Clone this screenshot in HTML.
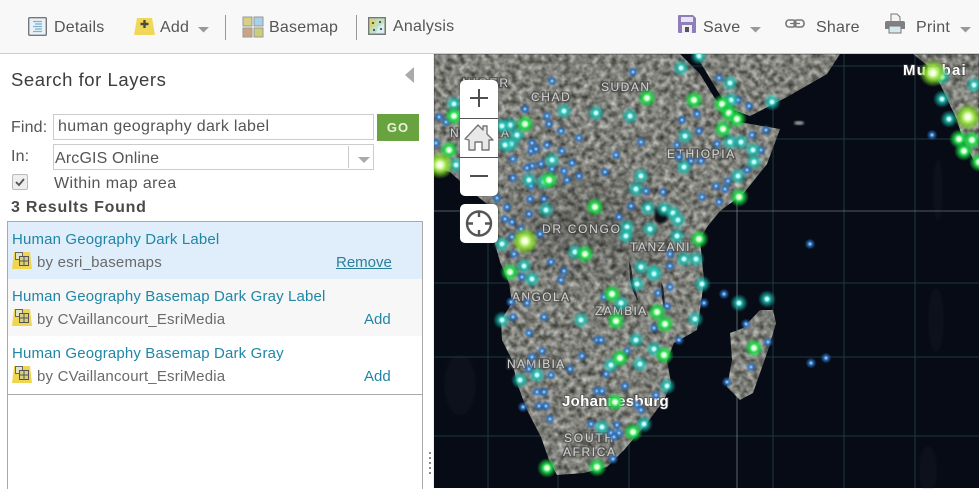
<!DOCTYPE html>
<html><head><meta charset="utf-8">
<style>
html,body{margin:0;padding:0;width:979px;height:488px;overflow:hidden;background:#fff;font-family:"Liberation Sans",sans-serif}
.a{position:absolute;white-space:nowrap;line-height:1}
#bar{position:absolute;left:0;top:0;width:979px;height:53px;background:#f8f8f8;border-bottom:1px solid #ccc}
.t{font-size:16px;color:#555;letter-spacing:.22px}
.sep{position:absolute;width:1px;height:25px;top:15px;background:#999}
.p{font-size:16px;color:#555;letter-spacing:.15px}
.title{font-size:15px;color:#1f86a6;letter-spacing:.15px}
.by{font-size:15px;color:#6a6a6a;letter-spacing:.2px}
.box{position:absolute;border:1px solid #ccc;box-sizing:border-box;background:#fff}
svg{position:absolute;overflow:visible}
</style></head><body>

<svg style="left:434px;top:54px" width="545" height="434" viewBox="434 54 545 434">
<defs>
<filter id="n" filterUnits="userSpaceOnUse" x="434" y="54" width="545" height="434" color-interpolation-filters="sRGB">
<feTurbulence type="fractalNoise" baseFrequency=".17" numOctaves="4" seed="7"/>
<feColorMatrix values=".8 0 0 0 .1 .8 0 0 0 .1 .8 0 0 0 .08 0 0 0 0 1"/>
<feGaussianBlur stdDeviation=".45"/>
<feComposite in2="SourceAlpha" operator="in"/>
</filter>
<filter id="bl"><feGaussianBlur stdDeviation="1"/></filter>
<filter id="bb"><feGaussianBlur stdDeviation="22"/></filter>
<radialGradient id="gb"><stop offset="0" stop-color="#cef"/><stop offset=".18" stop-color="#6ab0e8"/><stop offset=".45" stop-color="#2b6fc0" stop-opacity=".8"/><stop offset="1" stop-color="#2060b0" stop-opacity="0"/></radialGradient>
<radialGradient id="gt"><stop offset="0" stop-color="#fff"/><stop offset=".16" stop-color="#bff"/><stop offset=".4" stop-color="#1fc4b4" stop-opacity=".8"/><stop offset="1" stop-color="#10a8a0" stop-opacity="0"/></radialGradient>
<radialGradient id="gg"><stop offset="0" stop-color="#fff"/><stop offset=".2" stop-color="#d8ffd8"/><stop offset=".42" stop-color="#22e04a" stop-opacity=".95"/><stop offset="1" stop-color="#10c040" stop-opacity="0"/></radialGradient>
<radialGradient id="gy"><stop offset="0" stop-color="#fff"/><stop offset=".2" stop-color="#eaffc8"/><stop offset=".5" stop-color="#8fe030" stop-opacity=".9"/><stop offset="1" stop-color="#70d020" stop-opacity="0"/></radialGradient>
<circle id="b" r="5.5" fill="url(#gb)"/>
<circle id="t" r="9" fill="url(#gt)"/>
<circle id="g" r="10" fill="url(#gg)"/>
<circle id="y" r="14" fill="url(#gy)"/>
</defs>
<rect x="434" y="54" width="545" height="434" fill="#070b15"/>
<g fill="#3b4a52" opacity=".1" filter="url(#bl)">
<ellipse cx="936" cy="320" rx="8" ry="32"/><ellipse cx="928" cy="470" rx="9" ry="24"/><ellipse cx="938" cy="190" rx="5" ry="30"/><ellipse cx="460" cy="385" rx="16" ry="30"/>
</g>
<g stroke="#1d3a40" stroke-width="1">
<path d="M488 54V488M558 54V488M629 54V488M773 54V488M844 54V488M915 54V488M434 66H979M434 139H979M434 283H979M434 357H979M434 436H979"/>
</g>
<g stroke="#7f8f90" stroke-width="1"><path d="M737 54V488" opacity=".7"/><path d="M434 211H979" opacity=".6"/></g>
<g filter="url(#n)">
<path d="M434 54H680L700 74L714 97L733 121L780 129L767 164L743 194L720 211L707 227L700 240L704 280L700 310L697 330L674 343L667 360L671 383L664 400L647 423L624 450L607 467L584 473L557 475L549 460L541 437L527 410L517 383L512 360L502 340L501 320L512 303L509 283L500 262L494 240L488 205L470 190L450 172L434 168Z" fill="#fff"/>
<path d="M695 54H840L827 74L787 97L750 116L728 108L717 90L705 70Z" fill="#fff"/>
<path d="M913 54L933 70L943 90L957 120L963 140L979 170V54Z" fill="#fff"/>
<path d="M760 310L773 310L776 323L768 350L753 393L740 400L727 387L732 360L730 333L743 328Z" fill="#fff"/>
</g>
<ellipse cx="585" cy="225" rx="75" ry="45" fill="#000" opacity=".18" filter="url(#bb)"/>
<ellipse cx="799" cy="123" rx="5" ry="2" fill="#999" filter="url(#bl)"/>
<g fill="#0a0d14">
<path d="M655 211l6 -4 7 5 -1 9 -8 3 -5 -5z" filter="url(#bl)"/>
<path d="M629 262l2 4 2 14 3 12 2 8 -1 0 -4 -9 -3 -12z" opacity=".8"/>
<path d="M661 283l2 3 2 18 -1 5 -2 -11z" opacity=".8"/>
</g>
<g font-family="Liberation Sans,sans-serif" font-size="12" fill="#d4d4d4" style="paint-order:stroke" stroke="#444" stroke-width="3" stroke-opacity=".6">
<text x="462" y="87" letter-spacing="2">NIGER</text>
<text x="531" y="101" letter-spacing="1.6">CHAD</text>
<text x="601" y="91" letter-spacing="1.5">SUDAN</text>
<text x="667" y="158" letter-spacing="1.6">ETHIOPIA</text>
<text x="450" y="137" letter-spacing="1.6">NIGERIA</text>
<text x="542" y="233" letter-spacing="1.7">DR CONGO</text>
<text x="630" y="251" letter-spacing="1.5">TANZANI</text>
<text x="512" y="301" letter-spacing="1.4">ANGOLA</text>
<text x="595" y="315" letter-spacing="1.3">ZAMBIA</text>
<text x="507" y="368" letter-spacing="1.3">NAMIBIA</text>
<text x="564" y="442" letter-spacing="1.8">SOUTH</text>
<text x="563" y="456" letter-spacing="1.6">AFRICA</text>
<text x="562" y="406" font-size="15" font-weight="bold" fill="#fff" stroke-width="2" letter-spacing=".3">Johannesburg</text>
<text x="903" y="75" font-size="15" font-weight="bold" fill="#fff" stroke-width="2" letter-spacing="1.2">Mumbai</text>
</g>
<!-- blue -->
<g>
<use href="#b" x="633" y="72"/><use href="#b" x="552" y="81"/><use href="#b" x="439" y="117"/><use href="#b" x="446" y="122"/><use href="#b" x="525" y="109"/><use href="#b" x="547" y="116"/><use href="#b" x="549" y="124"/><use href="#b" x="561" y="131"/><use href="#b" x="579" y="138"/><use href="#b" x="641" y="142"/><use href="#b" x="532" y="143"/><use href="#b" x="547" y="145"/><use href="#b" x="531" y="151"/><use href="#b" x="536" y="149"/><use href="#b" x="562" y="151"/><use href="#b" x="616" y="155"/><use href="#b" x="513" y="159"/><use href="#b" x="572" y="163"/><use href="#b" x="541" y="164"/><use href="#b" x="532" y="166"/><use href="#b" x="527" y="168"/><use href="#b" x="552" y="169"/><use href="#b" x="564" y="171"/><use href="#b" x="605" y="172"/><use href="#b" x="579" y="176"/><use href="#b" x="567" y="180"/><use href="#b" x="513" y="178"/><use href="#b" x="531" y="186"/><use href="#b" x="663" y="192"/><use href="#b" x="646" y="191"/><use href="#b" x="702" y="197"/><use href="#b" x="530" y="199"/><use href="#b" x="544" y="199"/><use href="#b" x="497" y="198"/><use href="#b" x="507" y="207"/><use href="#b" x="631" y="206"/><use href="#b" x="529" y="214"/><use href="#b" x="505" y="219"/><use href="#b" x="512" y="222"/><use href="#b" x="540" y="234"/><use href="#b" x="521" y="229"/><use href="#b" x="512" y="237"/><use href="#b" x="619" y="217"/><use href="#b" x="514" y="254"/><use href="#b" x="551" y="262"/><use href="#b" x="564" y="271"/><use href="#b" x="670" y="254"/><use href="#b" x="670" y="266"/><use href="#b" x="697" y="114"/><use href="#b" x="682" y="120"/><use href="#b" x="699" y="131"/><use href="#b" x="677" y="145"/><use href="#b" x="679" y="157"/><use href="#b" x="701" y="161"/><use href="#b" x="691" y="161"/><use href="#b" x="436" y="143"/>
<use href="#b" x="719" y="78"/><use href="#b" x="738" y="100"/><use href="#b" x="749" y="106"/><use href="#b" x="752" y="135"/><use href="#b" x="766" y="130"/><use href="#b" x="761" y="150"/><use href="#b" x="747" y="170"/><use href="#b" x="728" y="181"/><use href="#b" x="725" y="189"/><use href="#b" x="716" y="186"/><use href="#b" x="719" y="202"/><use href="#b" x="810" y="244"/><use href="#b" x="932" y="135"/><use href="#b" x="717" y="144"/>
<use href="#b" x="561" y="280"/><use href="#b" x="522" y="277"/><use href="#b" x="670" y="287"/><use href="#b" x="604" y="297"/><use href="#b" x="658" y="293"/><use href="#b" x="667" y="306"/><use href="#b" x="704" y="303"/><use href="#b" x="527" y="303"/><use href="#b" x="511" y="302"/><use href="#b" x="513" y="317"/><use href="#b" x="544" y="317"/><use href="#b" x="654" y="328"/><use href="#b" x="529" y="333"/><use href="#b" x="597" y="340"/><use href="#b" x="601" y="340"/><use href="#b" x="679" y="340"/><use href="#b" x="542" y="351"/><use href="#b" x="532" y="357"/><use href="#b" x="582" y="356"/><use href="#b" x="627" y="351"/><use href="#b" x="570" y="369"/><use href="#b" x="529" y="369"/><use href="#b" x="551" y="375"/><use href="#b" x="606" y="374"/><use href="#b" x="625" y="386"/><use href="#b" x="597" y="391"/><use href="#b" x="602" y="391"/><use href="#b" x="656" y="395"/><use href="#b" x="637" y="405"/><use href="#b" x="641" y="410"/><use href="#b" x="537" y="392"/><use href="#b" x="544" y="392"/><use href="#b" x="539" y="406"/><use href="#b" x="546" y="406"/><use href="#b" x="523" y="407"/><use href="#b" x="550" y="419"/><use href="#b" x="591" y="424"/><use href="#b" x="617" y="425"/><use href="#b" x="611" y="433"/><use href="#b" x="619" y="433"/><use href="#b" x="614" y="437"/><use href="#b" x="613" y="459"/>
<use href="#b" x="724" y="294"/><use href="#b" x="746" y="324"/><use href="#b" x="768" y="342"/><use href="#b" x="751" y="367"/><use href="#b" x="727" y="382"/><use href="#b" x="811" y="363"/><use href="#b" x="826" y="358"/>
</g>
<!-- teal -->
<g>
<use href="#t" x="681" y="68"/><use href="#t" x="699" y="56"/><use href="#t" x="454" y="104"/><use href="#t" x="564" y="111"/><use href="#t" x="596" y="113"/><use href="#t" x="630" y="116"/><use href="#t" x="510" y="125"/><use href="#t" x="502" y="126"/><use href="#t" x="517" y="135"/><use href="#t" x="511" y="144"/><use href="#t" x="505" y="145"/><use href="#t" x="552" y="160"/><use href="#t" x="529" y="180"/><use href="#t" x="544" y="182"/><use href="#t" x="641" y="176"/><use href="#t" x="636" y="189"/><use href="#t" x="648" y="208"/><use href="#t" x="664" y="209"/><use href="#t" x="673" y="213"/><use href="#t" x="650" y="229"/><use href="#t" x="627" y="227"/><use href="#t" x="626" y="236"/><use href="#t" x="677" y="236"/><use href="#t" x="696" y="259"/><use href="#t" x="684" y="259"/><use href="#t" x="641" y="267"/><use href="#t" x="654" y="272"/><use href="#t" x="575" y="252"/><use href="#t" x="524" y="266"/><use href="#t" x="685" y="136"/><use href="#t" x="684" y="167"/><use href="#t" x="546" y="210"/><use href="#t" x="456" y="165"/><use href="#t" x="502" y="244"/><use href="#t" x="678" y="220"/>
<use href="#t" x="730" y="83"/><use href="#t" x="731" y="100"/><use href="#t" x="772" y="102"/><use href="#t" x="730" y="142"/><use href="#t" x="741" y="142"/><use href="#t" x="753" y="150"/><use href="#t" x="754" y="162"/><use href="#t" x="738" y="176"/>
<use href="#t" x="942" y="77"/><use href="#t" x="974" y="85"/><use href="#t" x="942" y="99"/><use href="#t" x="949" y="119"/>
<use href="#t" x="532" y="279"/><use href="#t" x="637" y="284"/><use href="#t" x="654" y="274"/><use href="#t" x="702" y="284"/><use href="#t" x="621" y="303"/><use href="#t" x="581" y="320"/><use href="#t" x="695" y="319"/><use href="#t" x="502" y="320"/><use href="#t" x="654" y="349"/><use href="#t" x="611" y="365"/><use href="#t" x="640" y="364"/><use href="#t" x="667" y="386"/><use href="#t" x="537" y="375"/><use href="#t" x="520" y="380"/><use href="#t" x="602" y="427"/><use href="#t" x="644" y="424"/><use href="#t" x="636" y="340"/>
<use href="#t" x="739" y="303"/><use href="#t" x="767" y="299"/>
</g>
<!-- green -->
<g>
<use href="#g" x="647" y="98"/><use href="#g" x="694" y="100"/><use href="#g" x="454" y="116"/><use href="#g" x="525" y="124"/><use href="#g" x="449" y="150"/><use href="#g" x="549" y="180"/><use href="#g" x="595" y="207"/><use href="#g" x="585" y="254"/><use href="#g" x="699" y="239"/><use href="#g" x="510" y="272"/>
<use href="#g" x="722" y="104"/><use href="#g" x="729" y="113"/><use href="#g" x="737" y="119"/><use href="#g" x="723" y="129"/><use href="#g" x="739" y="197"/>
<use href="#g" x="959" y="139"/><use href="#g" x="972" y="140"/><use href="#g" x="964" y="151"/><use href="#g" x="979" y="162"/>
<use href="#g" x="612" y="294"/><use href="#g" x="657" y="312"/><use href="#g" x="665" y="324"/><use href="#g" x="616" y="321"/><use href="#g" x="620" y="358"/><use href="#g" x="664" y="355"/><use href="#g" x="633" y="432"/><use href="#g" x="597" y="467"/><use href="#g" x="547" y="468"/><use href="#g" x="615" y="402"/><use href="#g" x="754" y="348"/>
<use href="#y" x="440" y="165"/><use href="#y" x="525" y="241"/><use href="#y" x="933" y="73"/><use href="#y" x="968" y="117"/>
</g>
</svg>

<!-- map controls -->
<div class="a" style="left:460px;top:80px;width:38px;height:116px;background:#fff;border-radius:5px;box-shadow:0 0 1px #222"></div>
<div class="a" style="left:460px;top:118px;width:38px;height:1px;background:#555"></div>
<div class="a" style="left:460px;top:157px;width:38px;height:1px;background:#555"></div>
<div class="a" style="left:460px;top:204px;width:38px;height:39px;background:#fff;border-radius:5px;box-shadow:0 0 1px #222"></div>
<svg style="left:460px;top:80px" width="38" height="163" viewBox="0 0 38 163">
<path d="M19 9V27M10 18H28" stroke="#4f4f4f" stroke-width="2" fill="none"/>
<path d="M5 59L18 45L23 50V46H27V54L33 60L29 60V70H22V62H15V70H9V60Z" fill="#e8e8e8" stroke="#777" stroke-width="1.4" stroke-linejoin="round"/>
<path d="M10 96H28" stroke="#4f4f4f" stroke-width="2"/>
<circle cx="19" cy="143.500" r="12" fill="none" stroke="#555" stroke-width="2.400"/>
<path d="M19 131V137M19 150V156M7 143.500H13M25 143.500H31" stroke="#555" stroke-width="2.400"/>
</svg>

<!-- panel -->
<div class="a" style="left:0;top:54px;width:434px;height:434px;background:#fff"></div>
<div class="a" style="left:433px;top:54px;width:1px;height:434px;background:#eee"></div>
<div class="a" style="left:429px;top:452px;width:2px;height:22px;background:repeating-linear-gradient(#888 0 2px,transparent 2px 5px)"></div>
<div class="a" style="left:11px;top:71px;font-size:18.5px;color:#3d3d3d;letter-spacing:.55px">Search for Layers</div>
<svg style="left:405px;top:67px" width="10" height="17"><path d="M9 0V16L0 8Z" fill="#aaa"/></svg>

<div class="a p" style="left:11px;top:120px">Find:</div>
<div class="box" style="left:53px;top:114px;width:321px;height:26px"></div>
<div class="a p" style="left:58px;top:119px;letter-spacing:.33px">human geography dark label</div>
<div class="a" style="left:377px;top:114px;width:42px;height:27px;background:#69a33f;color:#e8f2dc;font-weight:bold;font-size:13px;letter-spacing:1px;line-height:27px;text-align:center">GO</div>
<div class="a p" style="left:11px;top:149px">In:</div>
<div class="box" style="left:53px;top:144px;width:321px;height:26px"></div>
<div class="a" style="left:348px;top:146px;width:1px;height:22px;background:#ccc"></div>
<svg style="left:358px;top:157px" width="12" height="6"><path d="M0 0H12L6 6Z" fill="#aaa"/></svg>
<div class="a p" style="left:55px;top:151px">ArcGIS Online</div>
<div class="a" style="left:12px;top:174px;width:16px;height:16px;box-sizing:border-box;border:1px solid #bbb;border-radius:2px;background:#eee"></div>
<svg style="left:15px;top:178px" width="10" height="9"><path d="M1 4L4 7L9 1" stroke="#555" stroke-width="1.800" fill="none"/></svg>
<div class="a p" style="left:54px;top:176px;letter-spacing:.4px">Within map area</div>
<div class="a" style="left:11px;top:200px;font-size:16px;font-weight:bold;color:#4a4a4a;letter-spacing:.75px">3 Results Found</div>

<div class="a" style="left:7px;top:221px;width:414px;height:267px;box-sizing:content-box;border:1px solid #aaa;border-bottom:0"></div>
<div class="a" style="left:8px;top:222px;width:414px;height:57px;background:#dfeefa"></div>
<div class="a" style="left:8px;top:279px;width:414px;height:57px;background:#f7f7f7"></div>
<div class="a" style="left:8px;top:394px;width:414px;height:1px;background:#aaa"></div>

<div class="a title" style="left:12px;top:232px">Human Geography Dark Label</div>
<div class="a by" style="left:37px;top:255px">by esri_basemaps</div>
<div class="a" style="left:336px;top:255px;font-size:15px;color:#2c7f9c;text-decoration:underline">Remove</div>
<div class="a title" style="left:12px;top:289px">Human Geography Basemap Dark Gray Label</div>
<div class="a by" style="left:37px;top:312px">by CVaillancourt_EsriMedia</div>
<div class="a" style="left:364px;top:312px;font-size:15px;color:#1f86a6">Add</div>
<div class="a title" style="left:12px;top:346px">Human Geography Basemap Dark Gray</div>
<div class="a by" style="left:37px;top:369px">by CVaillancourt_EsriMedia</div>
<div class="a" style="left:364px;top:369px;font-size:15px;color:#1f86a6">Add</div>

<svg style="left:12px;top:251px" width="20" height="19"><path d="M2 1H18L20 18H0Z" fill="#efd64e"/><rect x="3.500" y="1.500" width="7" height="7" fill="#e4e4c0" stroke="#666"/><rect x="7.500" y="5.500" width="9" height="9" fill="#d9cf80" stroke="#555"/><path d="M12 5.500V14.500M7.500 10H16.500" stroke="#555"/></svg>
<svg style="left:12px;top:308px" width="20" height="19"><path d="M2 1H18L20 18H0Z" fill="#efd64e"/><rect x="3.500" y="1.500" width="7" height="7" fill="#e4e4c0" stroke="#666"/><rect x="7.500" y="5.500" width="9" height="9" fill="#d9cf80" stroke="#555"/><path d="M12 5.500V14.500M7.500 10H16.500" stroke="#555"/></svg>
<svg style="left:12px;top:365px" width="20" height="19"><path d="M2 1H18L20 18H0Z" fill="#efd64e"/><rect x="3.500" y="1.500" width="7" height="7" fill="#e4e4c0" stroke="#666"/><rect x="7.500" y="5.500" width="9" height="9" fill="#d9cf80" stroke="#555"/><path d="M12 5.500V14.500M7.500 10H16.500" stroke="#555"/></svg>

<!-- toolbar -->
<div id="bar"></div>
<svg style="left:28px;top:17px" width="19" height="19"><rect x=".7" y=".7" width="17.600" height="17.600" rx="1" fill="#e8f2f8" stroke="#777" stroke-width="1.400"/><path d="M5 4.500H14M7 7H14M5 9.500H14M7 12H14M5 14.500H14" stroke="#7fb0d0" stroke-width="1.200"/></svg>
<div class="a t" style="left:54px;top:20px">Details</div>
<svg style="left:134px;top:17px" width="21" height="19"><path d="M3 1H18L21 18H0Z" fill="#efd75a"/><path d="M10.500 3V11M6.500 7H14.500" stroke="#4a4a3a" stroke-width="2.400"/></svg>
<div class="a t" style="left:160px;top:20px">Add</div>
<svg style="left:198px;top:27px" width="11" height="6"><path d="M0 0H11L5.500 5.500Z" fill="#999"/></svg>
<div class="sep" style="left:225px"></div>
<svg style="left:243px;top:17px" width="20" height="20"><rect width="9" height="9" fill="#d8cf86" stroke="#999"/><rect x="11" width="9" height="9" fill="#a8d0e8" stroke="#999"/><rect y="11" width="9" height="9" fill="#c9a680" stroke="#999"/><rect x="11" y="11" width="9" height="9" fill="#c9cf78" stroke="#999"/></svg>
<div class="a t" style="left:269px;top:20px">Basemap</div>
<div class="sep" style="left:356px"></div>
<svg style="left:368px;top:17px" width="18" height="18"><rect x=".7" y=".7" width="16.600" height="16.600" fill="#bfe0c0" stroke="#777" stroke-width="1.400"/><path d="M2 2H9L6 9L2 12Z" fill="#d8d27a"/><path d="M10 10L16 6V16H8Z" fill="#d8eef0"/><circle cx="5" cy="6" r="1" fill="#333"/><circle cx="12" cy="5" r="1" fill="#333"/><circle cx="6" cy="13" r="1" fill="#333"/><circle cx="13" cy="12" r="1" fill="#333"/></svg>
<div class="a t" style="left:393px;top:19px">Analysis</div>
<svg style="left:678px;top:15px" width="18" height="18"><path d="M0 1Q0 0 1 0H15L18 3V17Q18 18 17 18H1Q0 18 0 17Z" fill="#8f7fb9"/><rect x="3" y="2" width="12" height="5" fill="#e8e4f2"/><rect x="4" y="10" width="10" height="8" fill="#f0eef4"/><rect x="7" y="12" width="4" height="5" fill="#555"/></svg>
<div class="a t" style="left:703px;top:20px">Save</div>
<svg style="left:750px;top:27px" width="11" height="6"><path d="M0 0H11L5.500 5.500Z" fill="#999"/></svg>
<svg style="left:785px;top:19px" width="20" height="9"><rect x="1" y="1" width="10" height="7" rx="3" fill="none" stroke="#777" stroke-width="1.600"/><rect x="9" y="1" width="10" height="7" rx="3" fill="none" stroke="#777" stroke-width="1.600"/><path d="M5 4.500H15" stroke="#777" stroke-width="1.200"/></svg>
<div class="a t" style="left:816px;top:20px">Share</div>
<svg style="left:885px;top:14px" width="20" height="19"><path d="M6 0H12L15 3V8H6Z" fill="#f4f4f4" stroke="#777"/><path d="M0 9Q0 7 2 7H18Q20 7 20 9V15H0Z" fill="#808080"/><rect x="4" y="12" width="12" height="7" fill="#d4e8ee" stroke="#777"/></svg>
<div class="a t" style="left:916px;top:20px">Print</div>
<svg style="left:960px;top:27px" width="11" height="6"><path d="M0 0H11L5.500 5.500Z" fill="#999"/></svg>
</body></html>
